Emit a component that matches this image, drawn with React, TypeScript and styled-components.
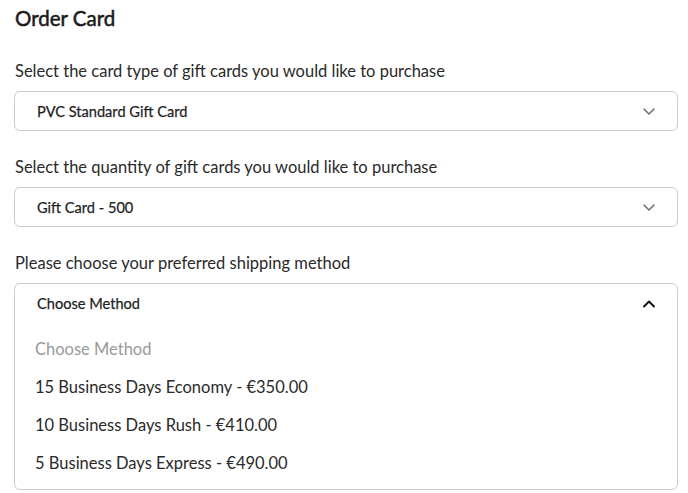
import React from "react";
import styled, { createGlobalStyle } from "styled-components";

const Global = createGlobalStyle`
  html, body { margin: 0; padding: 0; background: #fff; }
  body { font-family: Lato, "Open Sans", sans-serif; color: #222; }
`;

const Page = styled.div`
  padding: 4px 10px 0 14px;
  width: 664px;
  display: flex;
  flex-direction: column;
`;

const Title = styled.h1`
  margin: 0 0 29px 1px;
  font-size: 20.5px;
  line-height: 28px;
  font-weight: 400;
  -webkit-text-stroke: 0.5px #1a1a1a;
  color: #1a1a1a;
`;

const Field = styled.div`
  display: flex;
  flex-direction: column;
  gap: 10px;
  margin-bottom: 26px;
`;

const Label = styled.div`
  font-size: 16.5px;
  line-height: 20px;
  color: #2a2a2a;
  padding-left: 1px;
`;

const Box = styled.div`
  border: 1px solid #c9cccf;
  border-radius: 6px;
  background: #fff;
  display: flex;
  flex-direction: column;
`;

const Head = styled.div`
  height: 38px;
  display: flex;
  align-items: center;
  justify-content: space-between;
  padding: 0 21px 0 22px;
  font-size: 14.6px;
  font-weight: 400;
  color: #1f1f1f;
  -webkit-text-stroke: 0.25px #1f1f1f;
`;

const List = styled.div`
  display: flex;
  flex-direction: column;
  padding: 8px 0 7px;
`;

const Option = styled.div<{ $muted?: boolean }>`
  height: 38px;
  display: flex;
  align-items: center;
  padding-left: 20px;
  font-size: 16.5px;
  color: ${(p) => (p.$muted ? "#9a9a9a" : "#2a2a2a")};
`;

const Chevron = ({ up }: { up?: boolean }) =>
  up ? (
    <svg width="14" height="9" viewBox="0 0 14 9">
      <path d="M2 7.5 L7 2.5 L12 7.5" fill="none" stroke="#111" strokeWidth="2" strokeLinecap="round" strokeLinejoin="round" />
    </svg>
  ) : (
    <svg width="14" height="9" viewBox="0 0 14 9">
      <path d="M2 2 L7 7 L12 2" fill="none" stroke="#6b6b6b" strokeWidth="1.5" strokeLinecap="round" strokeLinejoin="round" />
    </svg>
  );

export default function App() {
  return (
    <>
      <Global />
      <Page>
        <Title>Order Card</Title>
        <Field>
          <Label>Select the card type of gift cards you would like to purchase</Label>
          <Box>
            <Head>
              PVC Standard Gift Card
              <Chevron />
            </Head>
          </Box>
        </Field>
        <Field>
          <Label>Select the quantity of gift cards you would like to purchase</Label>
          <Box>
            <Head>
              Gift Card - 500
              <Chevron />
            </Head>
          </Box>
        </Field>
        <Field>
          <Label>Please choose your preferred shipping method</Label>
          <Box>
            <Head>
              Choose Method
              <Chevron up />
            </Head>
            <List>
              <Option $muted>Choose Method</Option>
              <Option>15 Business Days Economy - €350.00</Option>
              <Option>10 Business Days Rush - €410.00</Option>
              <Option>5 Business Days Express - €490.00</Option>
            </List>
          </Box>
        </Field>
      </Page>
    </>
  );
}
